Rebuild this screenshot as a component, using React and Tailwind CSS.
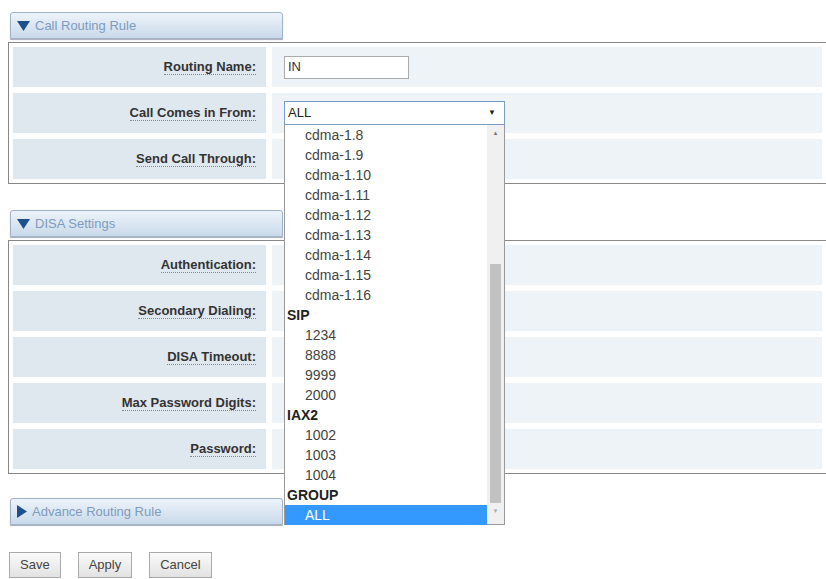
const font = { fontFamily: '"Liberation Sans", Arial, sans-serif' };

function Header({ title, open }) {
  return (
    <div className="ml-[10px] w-[273px] h-[27px] rounded-t-[3px] border border-[#9fb3c8] bg-gradient-to-b from-[#eef4fa] to-[#c9d9ea] flex items-center px-[6px] gap-[5px] shadow-[0_1px_1px_#aab]">
      {open ? (
        <svg width="13" height="10" viewBox="0 0 13 10"><path d="M0 0h13L6.5 10z" fill="#1d4f8c" /></svg>
      ) : (
        <svg width="10" height="13" viewBox="0 0 10 13"><path d="M0 0v13L10 6.5z" fill="#1d4f8c" /></svg>
      )}
      <span className="text-[13px] text-[#7f9bbd]">{title}</span>
    </div>
  );
}

function Row({ label, children }) {
  return (
    <div className="flex gap-[6px] h-[40px]">
      <div className="w-[253px] bg-[#dfe7ef] flex items-center justify-end pr-[10px]">
        <span className="text-[13px] font-bold text-[#333] border-b border-dotted border-[#888] leading-[15px]">{label}</span>
      </div>
      <div className="flex-1 bg-[#eef3f7] flex items-center pl-[12px]">{children}</div>
    </div>
  );
}

function Panel({ children }) {
  return (
    <div className="mt-[3px] ml-[8px] border border-[#888] border-r-0 p-[4px] flex flex-col gap-[6px]">{children}</div>
  );
}

const items = [
  ...Array.from({ length: 9 }, (_, i) => ({ t: `cdma-1.${i + 8}`, k: 'item' })),
  { t: 'SIP', k: 'g' },
  { t: '1234', k: 'item' }, { t: '8888', k: 'item' }, { t: '9999', k: 'item' }, { t: '2000', k: 'item' },
  { t: 'IAX2', k: 'g' },
  { t: '1002', k: 'item' }, { t: '1003', k: 'item' }, { t: '1004', k: 'item' },
  { t: 'GROUP', k: 'g' },
  { t: 'ALL', k: 'sel' },
];

export default function App() {
  return (
    <div className="relative w-[826px] h-[579px] bg-white overflow-hidden" style={font}>
      <div className="pt-[12px]">
        <Header title="Call Routing Rule" open />
        <Panel>
          <Row label="Routing Name:">
            <div className="w-[125px] h-[23px] border border-[#aaa] bg-white text-[13px] text-[#333] px-[3px] flex items-center">IN</div>
          </Row>
          <Row label="Call Comes in From:" />
          <Row label="Send Call Through:" />
        </Panel>
        <div className="h-[26px]" />
        <Header title="DISA Settings" open />
        <Panel>
          <Row label="Authentication:" />
          <Row label="Secondary Dialing:" />
          <Row label="DISA Timeout:" />
          <Row label="Max Password Digits:" />
          <Row label="Password:" />
        </Panel>
        <div className="h-[24px]" />
        <Header title="Advance Routing Rule" />
        <div className="flex gap-[17px] ml-[9px] mt-[27px]">
          {['Save', 'Apply', 'Cancel'].map((b) => (
            <button key={b} className="h-[26px] px-[10px] text-[13px] text-[#444] border border-[#aaa] bg-gradient-to-b from-[#fafafa] to-[#e2e2e2]">{b}</button>
          ))}
        </div>
      </div>

      <div className="absolute left-[284px] top-[101px] w-[221px]">
        <div className="h-[24px] border border-[#7a9cc6] bg-white flex items-center justify-between px-[3px] text-[13px] text-[#222]">
          <span>ALL</span>
          <span className="text-[8px] pr-[5px]">▼</span>
        </div>
        <div className="h-[400px] border border-t-0 border-[#999] bg-white flex">
          <div className="flex-1 flex flex-col">
            {items.map((it) => (
              <div
                key={it.t}
                className={
                  'h-[20px] leading-[20px] text-[14px] ' +
                  (it.k === 'g'
                    ? 'pl-[2px] font-bold text-[#222]'
                    : it.k === 'sel'
                    ? 'pl-[20px] bg-[#3399ff] text-white'
                    : 'pl-[20px] text-[#444]')
                }
              >
                {it.t}
              </div>
            ))}
          </div>
          <div className="w-[17px] bg-[#f0f0f0] flex flex-col items-center">
            <span className="text-[6px] text-[#777] h-[16px] leading-[16px]">▲</span>
            <div className="mt-[123px] w-[11px] h-[239px] bg-[#c2c2c2]" />
            <span className="text-[6px] text-[#aaa] mt-[4px]">▼</span>
          </div>
        </div>
      </div>
    </div>
  );
}
